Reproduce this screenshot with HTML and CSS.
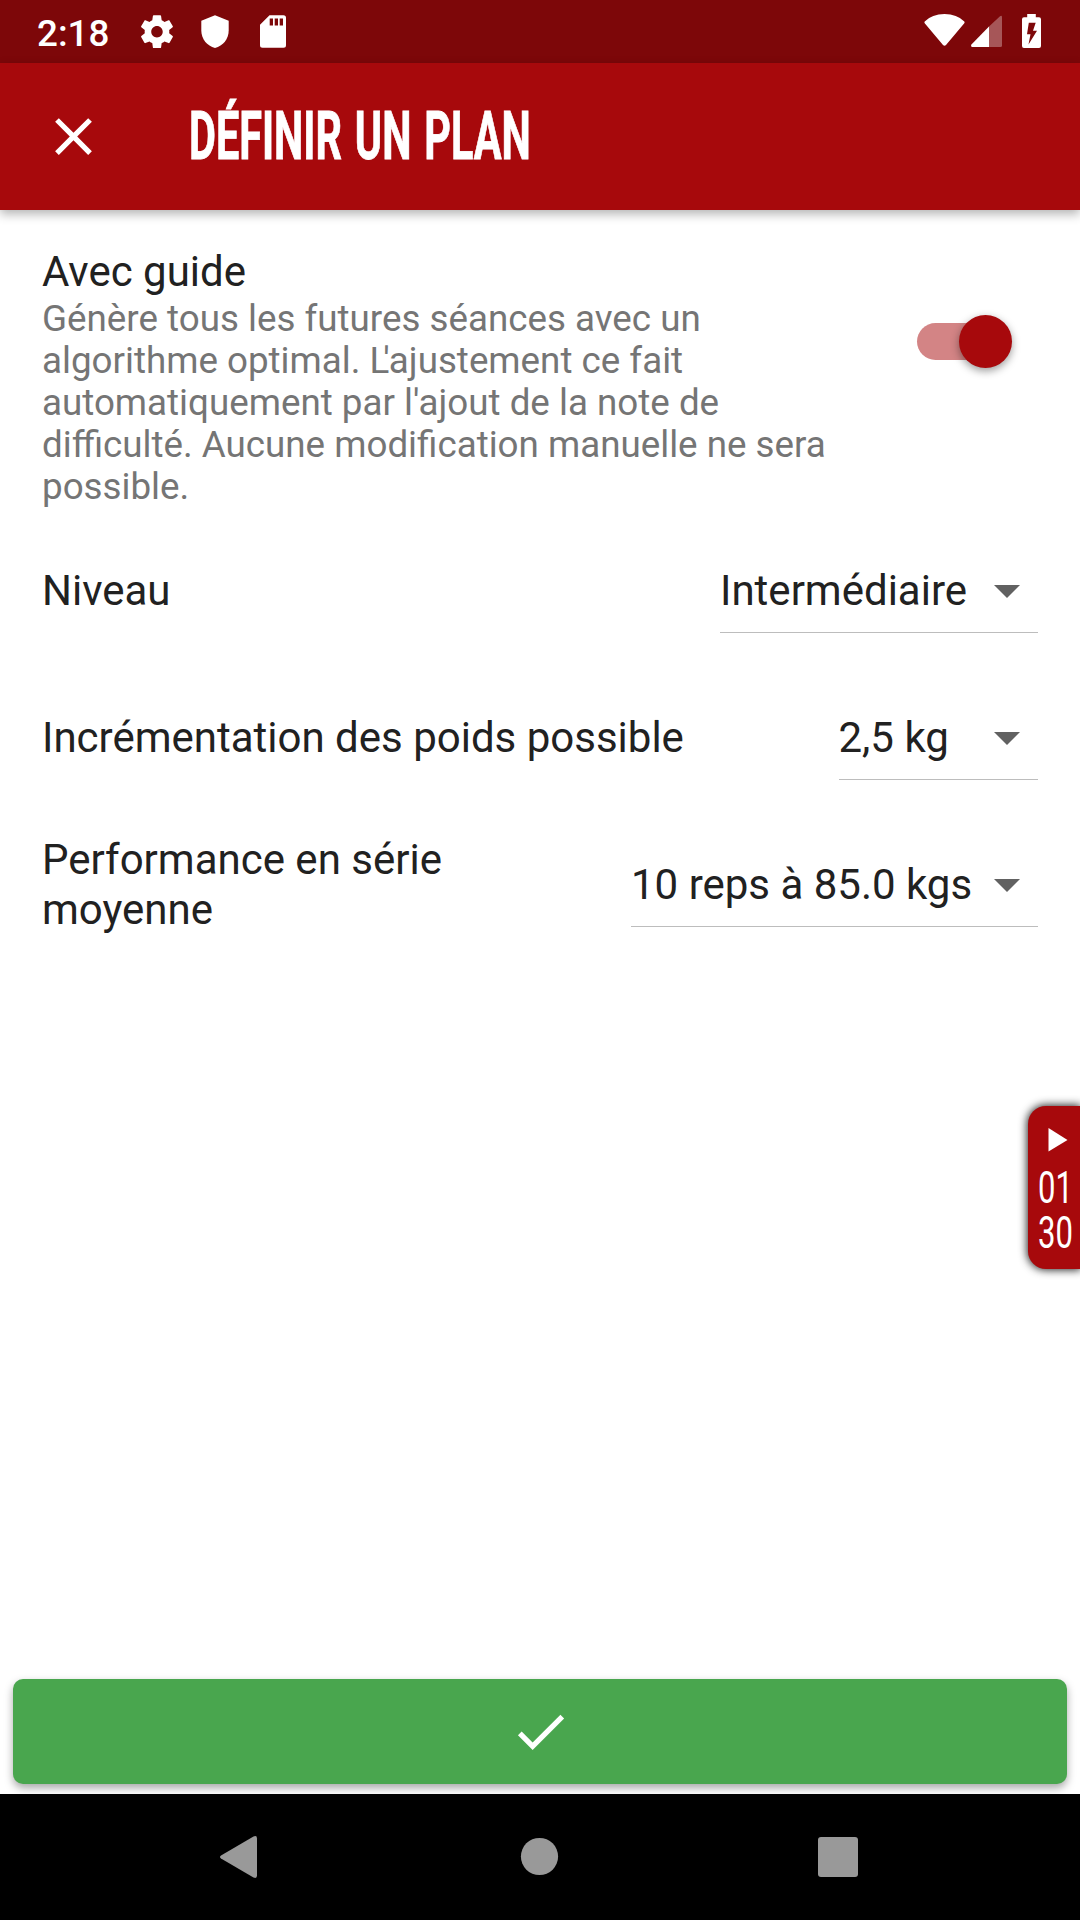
FILE: index.html
```html
<!DOCTYPE html>
<html lang="fr">
<head>
<meta charset="utf-8">
<title>Définir un plan</title>
<link rel="stylesheet" href="styles.css">
</head>
<body>
<div class="screen">
  <div class="status">
    <span class="clock">2:18</span>
    <svg class="status-left" width="150" height="63" viewBox="0 0 150 63" fill="#fff">
      <g transform="translate(1.3 12) scale(1.64)"><path d="M19.43 12.98c.04-.32.07-.64.07-.98s-.03-.66-.07-.98l2.11-1.65c.19-.15.24-.42.12-.64l-2-3.46c-.12-.22-.39-.3-.61-.22l-2.49 1c-.52-.4-1.08-.73-1.69-.98l-.38-2.65C14.46 2.18 14.25 2 14 2h-4c-.25 0-.46.18-.49.42l-.38 2.65c-.61.25-1.17.59-1.69.98l-2.49-1c-.23-.09-.49 0-.61.22l-2 3.46c-.13.22-.07.49.12.64l2.11 1.65c-.04.32-.07.65-.07.98s.03.66.07.98l-2.11 1.65c-.19.15-.24.42-.12.64l2 3.46c.12.22.39.3.61.22l2.49-1c.52.4 1.08.73 1.69.98l.38 2.65c.03.24.24.42.49.42h4c.25 0 .46-.18.49-.42l.38-2.65c.61-.25 1.17-.59 1.69-.98l2.49 1c.23.09.49 0 .61-.22l2-3.46c.12-.22.07-.49-.12-.64l-2.11-1.65zM12 15.5c-1.93 0-3.5-1.57-3.5-3.5s1.57-3.5 3.5-3.5 3.500 1.57 3.500 3.500-1.57 3.500-3.500 3.500z"/></g>
      <path d="M79 15.300L92.700 20.700V30.500C92.700 39 87 46 79 48C71 46 65.300 39 65.300 30.500V20.700Z"/>
      <path fill-rule="evenodd" d="M133.500 15.200H147.500Q150 15.200 150 17.700V45.300Q150 47.800 147.500 47.800H126.500Q124 47.800 124 45.300V24.700ZM133.700 18.500V25.500H137V18.500ZM138.700 18.500V25.500H142V18.500ZM143.700 18.500V25.500H147V18.500Z"/>
    </svg>
    <svg class="status-right" width="120" height="63" viewBox="0 0 120 63" fill="#fff">
      <path d="M4.700 21.500Q12 14 24.500 14T44.300 21.500Q45 22.200 44.300 23.200L26 45Q24.500 46.500 23 45L4.700 23.200Q4 22.200 4.700 21.500Z"/>
      <path d="M69 26.500L80 16.200Q82 15.200 82 17.200V45.500Q82 47 80.500 47H69Z" opacity=".32"/>
      <path d="M69 26.500V47H52Q50.500 46.500 51.200 44.700Z"/>
      <path fill-rule="evenodd" d="M107.200 14H115.800V17.300H119Q121 17.300 121 19.300V46Q121 48 119 48H104Q102 48 102 46V19.300Q102 17.300 104 17.300H107.200ZM108.800 22.800L107 34.200H110.500L108.500 44.500L117 30.700H113L115.700 22.800Z"/>
    </svg>
  </div>

  <div class="appbar">
    <svg class="icon" viewBox="0 0 24 24" fill="#fff"><path d="M19 6.410L17.590 5 12 10.590 6.410 5 5 6.410 10.590 12 5 17.590 6.410 19 12 13.410 17.590 19 19 17.590 13.410 12z"/></svg>
    <h1 class="title">DÉFINIR UN PLAN</h1>
  </div>

  <main class="content">
    <section class="guide">
      <div class="guide-text">
        <h2>Avec guide</h2>
        <p>Génère tous les futures séances avec un<br>algorithme optimal. <span class="kern">L</span>'ajustement ce fait<br>automatiquement par l'ajout de la note de<br>difficulté. Aucune modification manuelle ne sera<br>possible.</p>
      </div>
      <div class="switch"><span class="thumb"></span></div>
    </section>

    <div class="row">
      <span class="label">Niveau</span>
      <div class="select level"><span>Intermédiaire</span><i class="caret"></i></div>
    </div>
    <div class="row">
      <span class="label">Incrémentation des poids possible</span>
      <div class="select weight"><span>2,5 kg</span><i class="caret"></i></div>
    </div>
    <div class="row">
      <span class="label">Performance en série<br>moyenne</span>
      <div class="select perf"><span>10 reps à 85.0 kgs</span><i class="caret"></i></div>
    </div>
  </main>

  <div class="confirm">
    <svg class="icon" viewBox="0 0 24 24" fill="#fff"><path d="M9 16.170L4.830 12l-1.420 1.410L9 19 21 7l-1.410-1.410z"/></svg>
  </div>

  <nav class="navbar">
    <svg width="1080" height="126" viewBox="0 0 1080 126" fill="#999">
      <path d="M221 61.500L253.500 42.500Q257 41 257 44.500V81.500Q257 85 253.500 83.500L221 64.500Q219 63 221 61.500Z"/>
      <circle cx="539.500" cy="62.500" r="18.600"/>
      <rect x="818" y="43" width="40" height="40" rx="3"/>
    </svg>
  </nav>

  <aside class="timer">
    <svg width="20" height="24" viewBox="0 0 20 24" fill="#fff"><path d="M.5 0L19.500 12L.5 23.500Z"/></svg>
    <span class="digits">01</span>
    <span class="digits">30</span>
  </aside>
</div>
</body>
</html>
```
FILE: styles.css
```css
* { box-sizing: border-box; }

body {
  margin: 0;
  font-family: Roboto, sans-serif;
  color: #212121;
}

.screen {
  position: relative;
  display: flex;
  flex-direction: column;
  width: 1080px;
  height: 1920px;
  overflow: hidden;
  background: #fff;
}

.icon { width: 63px; height: 63px; }

.status {
  display: flex;
  align-items: center;
  height: 63px;
  padding-left: 37px;
  background: #7d0709;
}

.clock {
  width: 99px;
  padding-top: 4px;
  color: #fff;
  font-size: 36.75px;
  font-weight: 500;
}

.status svg { overflow: visible; }

.status-right { margin-left: 634px; }

.appbar {
  display: flex;
  align-items: center;
  height: 147px;
  padding-left: 42px;
  gap: 84px;
  background: #a7090c;
  box-shadow: 0 4px 10px rgba(0, 0, 0, .3);
}

.title {
  margin: 0;
  padding-top: 1px;
  color: #fff;
  font-size: 66px;
  font-weight: 700;
  line-height: 76px;
  white-space: nowrap;
  word-spacing: 4px;
  -webkit-text-stroke: .8px #fff;
  transform: scaleX(.628);
  transform-origin: 0 50%;
}

.content { flex: 1; padding: 37px 42px 0; }

.guide {
  display: flex;
  justify-content: space-between;
  height: 270px;
}

.guide h2 {
  margin: 0;
  font-size: 42px;
  font-weight: 400;
  line-height: 50px;
}

.guide p {
  margin: 1px 0 0;
  color: #757575;
  font-size: 36.75px;
  line-height: 42px;
}

.kern { letter-spacing: -6px; }

.switch {
  display: flex;
  align-items: center;
  justify-content: flex-end;
  width: 95px;
  height: 37px;
  margin: 76px 26px 0 0;
  border-radius: 19px;
  background: linear-gradient(90deg, #d38485 80px, transparent 80px);
}

.thumb {
  width: 53px;
  height: 53px;
  border-radius: 50%;
  background: #a7090c;
  box-shadow: 0 3px 8px rgba(0, 0, 0, .4);
}

.row {
  display: flex;
  align-items: center;
  justify-content: space-between;
  height: 147px;
  font-size: 42px;
  line-height: 50px;
}

.select {
  display: flex;
  align-items: center;
  justify-content: space-between;
  height: 84px;
  padding: 2px 18.500px 0 0;
  border-bottom: 1px solid #bdbdbd;
  white-space: nowrap;
}

.level { width: 318px; }
.weight { width: 199.500px; }
.perf { width: 407px; }

.caret {
  border: 13px solid transparent;
  border-top-color: #616161;
  border-bottom: 0;
}

.confirm {
  display: flex;
  align-items: center;
  justify-content: center;
  height: 105.500px;
  margin: 0 13px 10px;
  border-radius: 10px;
  background: #49a64e;
  box-shadow: 0 4px 8px rgba(0, 0, 0, .35);
}

.navbar {
  position: relative;
  height: 126px;
  background: #000;
}

.timer {
  position: absolute;
  top: 1106px;
  right: 0;
  display: flex;
  flex-direction: column;
  align-items: flex-start;
  width: 52px;
  height: 163px;
  padding: 21.500px 0 0 10px;
  border-radius: 18px 0 0 18px;
  background: #a7090c;
  box-shadow: 0 0 9px 1px rgba(0, 0, 0, .85);
  color: #fff;
  font-size: 45px;
  line-height: 45px;
}

.timer svg { margin: 0 0 13.500px 10px; }

.digits {
  transform: scaleX(.69);
  transform-origin: 0 50%;
}
```
